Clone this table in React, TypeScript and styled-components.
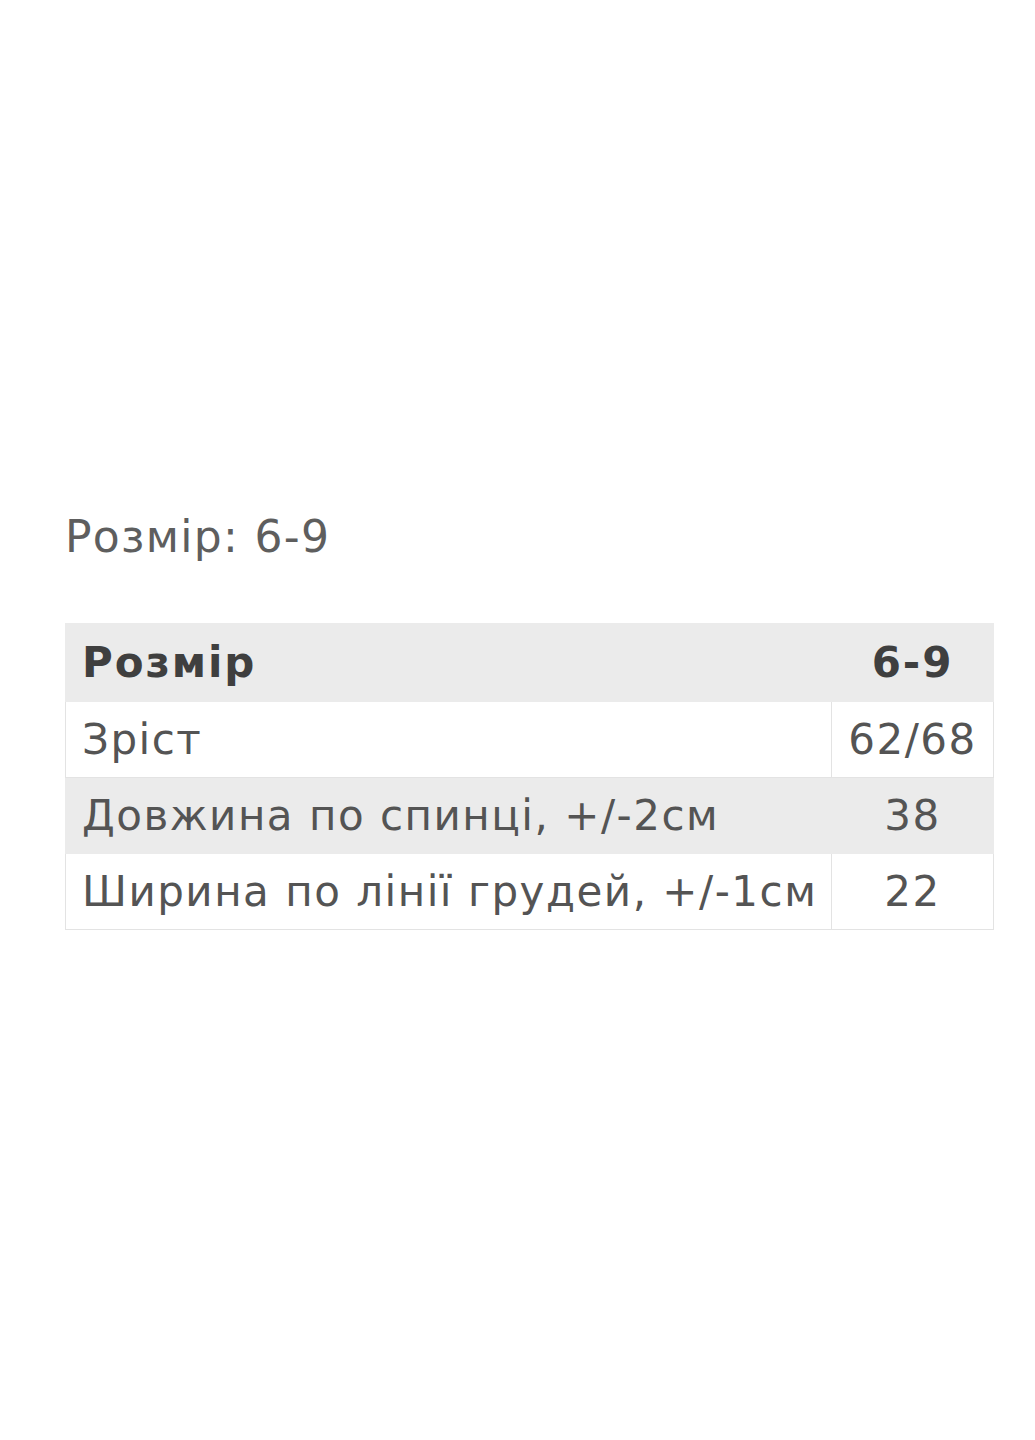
import React from "react";
import styled, { createGlobalStyle } from "styled-components";

const Global = createGlobalStyle`
  html, body { margin: 0; padding: 0; background: #ffffff; }
  body { font-family: "DejaVu Sans", "Open Sans", sans-serif; }
`;

const Page = styled.div`
  width: 1035px;
  height: 1440px;
  box-sizing: border-box;
  padding: 506px 42px 0 65px;
  display: flex;
  flex-direction: column;
`;

const Title = styled.h2`
  margin: 0 0 55px 0;
  font-weight: 400;
  font-size: 44px;
  line-height: 62px;
  color: #5e5e5e;
  letter-spacing: 1.3px;
`;

const Table = styled.table`
  width: 928px;
  border-collapse: collapse;
  table-layout: fixed;
  border: 1px solid #e3e3e3;
`;

const Row = styled.tr<{ $shade?: boolean; $head?: boolean }>`
  background: ${(p) => (p.$shade ? "#ebebeb" : "#ffffff")};
  height: ${(p) => (p.$head ? 78 : 76)}px;
`;

const Cell = styled.td<{ $center?: boolean; $bold?: boolean; $shade?: boolean }>`
  padding: 0 16px;
  border: 1px solid ${(p) => (p.$shade ? "#ebebeb" : "#e3e3e3")};
  font-size: 42px;
  font-weight: ${(p) => (p.$bold ? 700 : 400)};
  letter-spacing: ${(p) => (p.$bold ? 1.9 : 1.5)}px;
  color: ${(p) => (p.$bold ? "#3f3f3f" : "#545454")};
  text-align: ${(p) => (p.$center ? "center" : "left")};
  vertical-align: middle;
  white-space: nowrap;
`;

const rows = [
  { label: "Зріст", value: "62/68", shade: false },
  { label: "Довжина по спинці, +/-2см", value: "38", shade: true },
  { label: "Ширина по лінії грудей, +/-1см", value: "22", shade: false },
];

export default function App() {
  return (
    <>
      <Global />
      <Page>
        <Title>Розмір: 6-9</Title>
        <Table>
          <colgroup>
            <col style={{ width: 766 }} />
            <col style={{ width: 162 }} />
          </colgroup>
          <tbody>
            <Row $shade $head>
              <Cell $bold $shade>Розмір</Cell>
              <Cell $bold $shade $center>6-9</Cell>
            </Row>
            {rows.map((r) => (
              <Row key={r.label} $shade={r.shade}>
                <Cell $shade={r.shade}>{r.label}</Cell>
                <Cell $shade={r.shade} $center>{r.value}</Cell>
              </Row>
            ))}
          </tbody>
        </Table>
      </Page>
    </>
  );
}
